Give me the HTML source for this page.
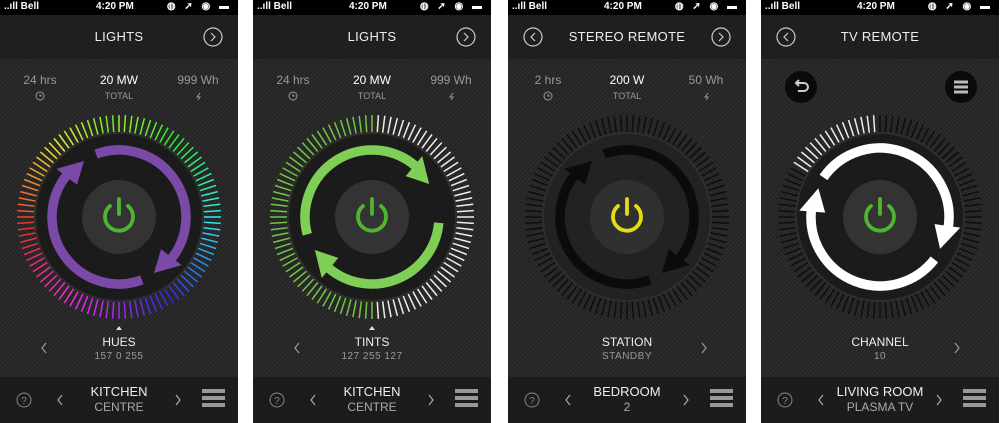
<!DOCTYPE html>
<html><head><meta charset="utf-8">
<style>
*{margin:0;padding:0;box-sizing:border-box}
body{width:1000px;height:423px;background:#fff;position:relative;overflow:hidden;font-family:"Liberation Sans",sans-serif}
.scr{position:absolute;top:0;width:238px;height:423px;overflow:hidden;
background:repeating-linear-gradient(135deg,#2d2d2d 0 1.5px,#232323 1.5px 3px)}
.sb{position:absolute;top:0;left:0;right:0;height:15px;background:#000;color:#fff;font-size:10px;font-weight:bold}
.hd{position:absolute;top:15px;left:0;right:0;height:44px;background:#1f1f1f;color:#eee;font-size:13px;text-align:center;line-height:44px;letter-spacing:.3px}
.ft{position:absolute;top:377px;left:0;right:0;height:46px;background:#1c1c1c}
.t{position:absolute;text-align:center;white-space:nowrap;transform:translateX(-50%)}
svg{position:absolute;left:0;top:0}
</style></head><body>
<div id="root"></div>
<script>
const S=[
{x:0,title:"LIGHTS",l:0,r:1,st:["24 hrs","20 MW","999 Wh"],lab:["HUES","157 0 255"],ch:"L",tri:1,ft:["KITCHEN","CENTRE"],mode:"hue",arc:"#7b4aa8",pw:"#4fb52f",arcs:[[-20,128,148],[160,308,328]],ar:67,disk:"#1b1b1b",cb:"#333"},
{x:253,title:"LIGHTS",l:0,r:1,st:["24 hrs","20 MW","999 Wh"],lab:["TINTS","127 255 127"],ch:"L",tri:1,ft:["KITCHEN","CENTRE"],mode:"tint",arc:"#7fcf56",pw:"#4fb52f",arcs:[[255,400,420],[95,220,240]],ar:67,disk:"#1b1b1b",cb:"#333"},
{x:508,title:"STEREO REMOTE",l:1,r:1,st:["2 hrs","200 W","50 Wh"],lab:["STATION","STANDBY"],ch:"R",tri:0,ft:["BEDROOM","2"],mode:"black",arc:"#0b0b0b",pw:"#e6dc12",arcs:[[-20,128,148],[160,308,328]],ar:67,disk:"#222",cb:"#303030"},
{x:761,title:"TV REMOTE",l:1,r:0,st:null,lab:["CHANNEL","10"],ch:"R",tri:0,ft:["LIVING ROOM","PLASMA TV"],mode:"tv",arc:"#fff",pw:"#4fb52f",arcs:[[305,458,478],[128,275,295]],ar:69,disk:"#1b1b1b",cb:"#333"}
];
function P(cx,cy,r,a){a=a*Math.PI/180;return[cx+r*Math.sin(a),cy-r*Math.cos(a)];}
let h="";
for(const s of S){
 const cx=119,cy=217;
 let g=`<svg width="238" height="423">`;
 for(let i=0;i<100;i++){const a=i*3.6;let c;
  if(s.mode=="hue"){c=`hsl(${(85+a*1.05)%360},85%,55%)`}
  else if(s.mode=="tint"){c=(a>0&&a<178)?"#eee":"#72c545"}
  else if(s.mode=="black"){c="#0e0e0e"}
  else{c=(a>=300&&a<360)?"#eee":"#0e0e0e"}
  const [x1,y1]=P(cx,cy,85,a),[x2,y2]=P(cx,cy,102,a);
  g+=`<line x1="${x1.toFixed(1)}" y1="${y1.toFixed(1)}" x2="${x2.toFixed(1)}" y2="${y2.toFixed(1)}" stroke="${c}" stroke-width="1.5"/>`;}
 g+=`<circle cx="${cx}" cy="${cy}" r="84" fill="${s.disk}" stroke="#2e2e2e" stroke-width="2"/>`;
 for(const [a0,a1,a2] of s.arcs){const r=s.ar;
  const [x0,y0]=P(cx,cy,r,a0),[x1,y1]=P(cx,cy,r,a1);
  const big=(a1-a0)>180?1:0;
  g+=`<path d="M${x0} ${y0}A${r} ${r} 0 ${big} 1 ${x1} ${y1}" fill="none" stroke="${s.arc}" stroke-width="9.5"/>`;
  const [b1x,b1y]=P(cx,cy,r-14,a1-0.5),[b2x,b2y]=P(cx,cy,r+12,a1-0.5),[tx,ty]=P(cx,cy,r-1,a2);
  g+=`<polygon points="${b1x},${b1y} ${b2x},${b2y} ${tx},${ty}" fill="${s.arc}"/>`;}
 g+=`<circle cx="${cx}" cy="${cy}" r="37" fill="${s.cb}"/>`;
 g+=`<path d="M${cx-9} ${cy-11}A14 14 0 1 0 ${cx+9} ${cy-11}" fill="none" stroke="${s.pw}" stroke-width="3.8" stroke-linecap="round"/><line x1="${cx}" y1="${cy-18}" x2="${cx}" y2="${cy-3}" stroke="${s.pw}" stroke-width="3.8" stroke-linecap="round"/>`;
 if(s.tri)g+=`<polygon points="116,330 122,330 119,326" fill="#ddd"/>`;
 if(s.l)g+=`<circle cx="25" cy="37" r="9" fill="none" stroke="#ccc" stroke-width="1.2"/><path d="M27 33L23 37L27 41" fill="none" stroke="#ccc" stroke-width="1.2"/>`;
 if(s.r)g+=`<circle cx="213" cy="37" r="9" fill="none" stroke="#ccc" stroke-width="1.2"/><path d="M211 33L215 37L211 41" fill="none" stroke="#ccc" stroke-width="1.2"/>`;
 if(s.st){g+=`<circle cx="40" cy="96" r="4" fill="none" stroke="#999" stroke-width="1"/><path d="M40 94V96H42" fill="none" stroke="#999" stroke-width="1"/><path d="M200 93L197 97H200L198 100" fill="none" stroke="#999" stroke-width="1"/>`;}
 else{g+=`<circle cx="40" cy="87" r="16" fill="#0a0a0a"/><path d="M35 83H43A4 4 0 0 1 43 91H37M38 80L35 83L38 86" fill="none" stroke="#ccc" stroke-width="2"/><circle cx="200" cy="87" r="16" fill="#0a0a0a"/><path d="M193 82H207M193 87H207M193 92H207" stroke="#bbb" stroke-width="3"/>`;}
 if(s.ch=="L")g+=`<path d="M46 343L42 348L46 353" fill="none" stroke="#999" stroke-width="1.2"/>`;
 else g+=`<path d="M194 343L198 348L194 353" fill="none" stroke="#999" stroke-width="1.2"/>`;
 g+=`</svg>`;
 let ft=`<div class="ft"><svg width="238" height="46"><circle cx="24" cy="23" r="7" fill="none" stroke="#888" stroke-width="1"/><text x="24" y="27" font-size="10" fill="#888" text-anchor="middle" font-family="Liberation Sans">?</text><path d="M62 18L58 23L62 28" fill="none" stroke="#aaa" stroke-width="1.2"/><path d="M176 18L180 23L176 28" fill="none" stroke="#aaa" stroke-width="1.2"/><rect x="202" y="12" width="23" height="4" fill="#999"/><rect x="202" y="19" width="23" height="4" fill="#999"/><rect x="202" y="26" width="23" height="4" fill="#999"/></svg>
 <div class="t" style="left:119px;top:7px;font-size:13px;color:#eee">${s.ft[0]}</div><div class="t" style="left:119px;top:23px;font-size:12px;color:#aaa">${s.ft[1]}</div></div>`;
 let st="";
 if(s.st)st=`<div class="t" style="left:40px;top:73px;font-size:12px;color:#999">${s.st[0]}</div><div class="t" style="left:119px;top:73px;font-size:12px;color:#fff">${s.st[1]}</div><div class="t" style="left:198px;top:73px;font-size:12px;color:#999">${s.st[2]}</div><div class="t" style="left:119px;top:91px;font-size:9px;color:#999">TOTAL</div>`;
 h+=`<div class="scr" style="left:${s.x}px">
 <div class="sb"><span style="position:absolute;left:4px;top:1px">..ıll Bell</span><span style="position:absolute;left:96px;top:1px">4:20 PM</span><span style="position:absolute;right:6px;top:1px;letter-spacing:3px">◍ ➚ ◉ ▬</span></div>
 <div class="hd">${s.title}</div>${g}${st}
 <div class="t" style="left:119px;top:335px;font-size:12px;color:#eee">${s.lab[0]}</div>
 <div class="t" style="left:119px;top:351px;font-size:10px;color:#999;letter-spacing:.5px">${s.lab[1]}</div>
 ${ft}</div>`;
}
document.getElementById("root").innerHTML=h;
</script>
</body></html>
